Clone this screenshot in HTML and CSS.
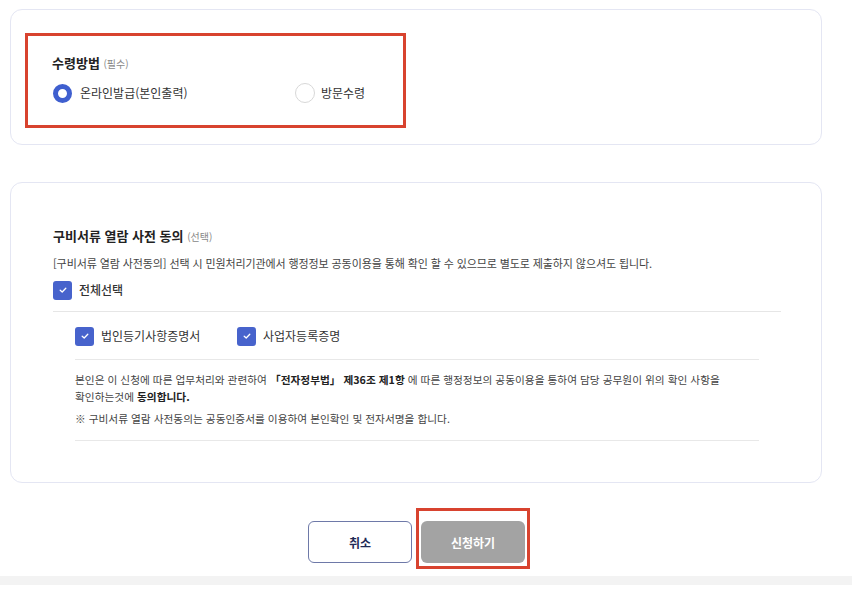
FILE: index.html
```html
<!DOCTYPE html>
<html lang="ko">
<head>
<meta charset="utf-8">
<title>신청</title>
<link rel="stylesheet" href="styles.css">
</head>
<body>
<div class="page">
  <section class="card card-receive">
    <div class="mark mark-receive">
      <h2 class="title">수령방법 <span class="tag">(필수)</span></h2>
      <div class="radios">
        <label class="radio on"><span class="dot"></span>온라인발급(본인출력)</label>
        <label class="radio off"><span class="dot"></span>방문수령</label>
      </div>
    </div>
  </section>

  <section class="card card-consent">
    <h2 class="title">구비서류 열람 사전 동의 <span class="tag">(선택)</span></h2>
    <p class="desc">[구비서류 열람 사전동의] 선택 시 민원처리기관에서 행정정보 공동이용을 통해 확인 할 수 있으므로 별도로 제출하지 않으셔도 됩니다.</p>
    <label class="check all"><span class="box"><svg viewBox="0 0 10 10" width="10" height="10"><path d="M2.2 5.2 L4.2 7 L7.8 3.2" fill="none" stroke="#fff" stroke-width="1.3" stroke-linecap="round" stroke-linejoin="round"/></svg></span>전체선택</label>
    <div class="sub">
      <div class="sub-checks">
        <label class="check"><span class="box"><svg viewBox="0 0 10 10" width="10" height="10"><path d="M2.2 5.2 L4.2 7 L7.8 3.2" fill="none" stroke="#fff" stroke-width="1.3" stroke-linecap="round" stroke-linejoin="round"/></svg></span>법인등기사항증명서</label>
        <label class="check"><span class="box"><svg viewBox="0 0 10 10" width="10" height="10"><path d="M2.2 5.2 L4.2 7 L7.8 3.2" fill="none" stroke="#fff" stroke-width="1.3" stroke-linecap="round" stroke-linejoin="round"/></svg></span>사업자등록증명</label>
      </div>
      <div class="agree">
        <p class="agree-text">본인은 이 신청에 따른 업무처리와 관련하여 <b>「전자정부법」 제36조 제1항</b> 에 따른 행정정보의 공동이용을 통하여 담당 공무원이 위의 확인 사항을<br>확인하는것에 <b>동의합니다.</b></p>
        <p class="agree-note">※ 구비서류 열람 사전동의는 공동인증서를 이용하여 본인확인 및 전자서명을 합니다.</p>
      </div>
    </div>
  </section>

  <div class="actions">
    <button class="btn btn-cancel">취소</button>
    <div class="mark mark-submit"><button class="btn btn-submit">신청하기</button></div>
  </div>
</div>
<div class="footer-bar"></div>
</body>
</html>
```

FILE: styles.css
```css
* { box-sizing: border-box; }
html, body { margin: 0; padding: 0; background: #fff; }
body {
  font-family: "Noto Sans CJK KR", "Noto Sans", sans-serif;
  color: #222;
  width: 852px;
  height: 595px;
  overflow: hidden;
}
.page {
  padding: 9px 30px 0 10px;
}
.card {
  border: 1px solid #e4e6f3;
  border-radius: 12px;
  background: #fff;
}
.card-receive {
  height: 136px;
  padding: 23px 0 0 14px;
}
.mark {
  border: 3px solid #d8432f;
}
.mark-receive {
  width: 381px;
  height: 95px;
  padding: 18px 0 0 24px;
}
.title {
  margin: 0;
  font-size: 13px;
  font-weight: 700;
  line-height: 18px;
  color: #222;
}
.tag {
  font-size: 10px;
  font-weight: 400;
  color: #888;
}
.radios {
  display: flex;
  margin-top: 10px;
}
.radio {
  display: flex;
  align-items: center;
  font-size: 12px;
  color: #333;
  line-height: 20px;
}
.radio.on { width: 242px; margin-left: 1px; }
.radio .dot {
  width: 19px;
  height: 19px;
  border-radius: 50%;
  margin-right: 8px;
  flex: none;
}
.radio.on .dot {
  border: 5px solid #3f5fcf;
  background: #fff;
}
.radio.off .dot {
  width: 20px;
  height: 20px;
  border: 1px solid #d8d8d8;
  background: #fff;
  margin-right: 6px;
}

.card-consent {
  margin-top: 37px;
  height: 301px;
  padding: 44px 0 0 42px;
}
.desc {
  margin: 9px 0 0;
  font-size: 11px;
  line-height: 16px;
  color: #444;
  letter-spacing: -0.1px;
}
.check {
  display: flex;
  align-items: center;
  font-size: 12px;
  color: #333;
  line-height: 20px;
}
.check .box {
  width: 19px;
  height: 19px;
  border-radius: 3px;
  background: #4763cc;
  display: flex;
  align-items: center;
  justify-content: center;
  margin-right: 7px;
  flex: none;
}
.check.all {
  margin-top: 9px;
  font-weight: 500;
}
.sub {
  margin-top: 11px;
  width: 728px;
  border-top: 1px solid #e6e6e6;
  padding: 14px 22px 0;
}
.sub-checks {
  display: flex;
  gap: 0;
  padding-bottom: 13px;
  border-bottom: 1px solid #e8e8e8;
}
.sub-checks .check { width: 162px; }
.agree {
  padding: 11px 0 13px;
  border-bottom: 1px solid #e8e8e8;
}
.agree-text {
  margin: 0;
  font-size: 10.7px;
  line-height: 17px;
  color: #444;
}
.agree-text b { color: #222; font-weight: 700; }
.agree-note {
  margin: 6px 0 0;
  font-size: 10.7px;
  line-height: 16px;
  color: #444;
}

.actions {
  display: flex;
  justify-content: center;
  align-items: flex-start;
  margin-top: 25px;
  padding-left: 6px;
  gap: 4px;
}
.btn {
  width: 104px;
  height: 42px;
  border-radius: 6px;
  font-family: inherit;
  font-size: 12px;
  font-weight: 700;
  cursor: pointer;
}
.btn-cancel {
  margin-top: 13px;
  background: #fff;
  border: 1px solid #6e79a8;
  color: #1f2a55;
}
.mark-submit {
  padding: 10px 2px 3px 2px;
}
.btn-submit {
  background: #a3a3a3;
  border: none;
  color: #fff;
}
.footer-bar {
  position: absolute;
  left: 0;
  top: 576px;
  width: 852px;
  height: 9px;
  background: #f3f3f3;
}
```
